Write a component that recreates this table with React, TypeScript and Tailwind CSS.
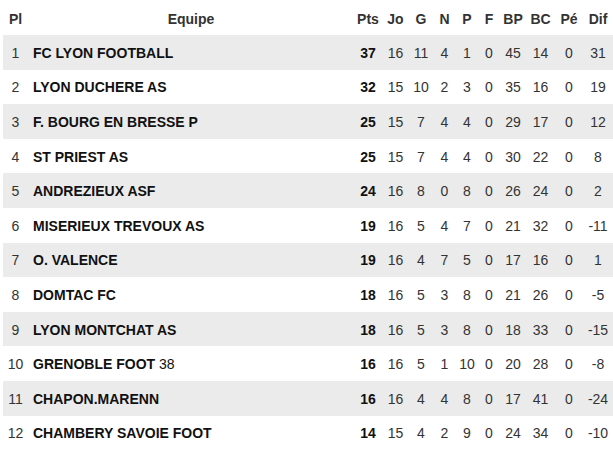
const rows = [
  { pl: 1, name: 'FC LYON FOOTBALL', pts: 37, jo: 16, g: 11, n: 4, p: 1, f: 0, bp: 45, bc: 14, pe: 0, dif: 31 },
  { pl: 2, name: 'LYON DUCHERE AS', pts: 32, jo: 15, g: 10, n: 2, p: 3, f: 0, bp: 35, bc: 16, pe: 0, dif: 19 },
  { pl: 3, name: 'F. BOURG EN BRESSE P', pts: 25, jo: 15, g: 7, n: 4, p: 4, f: 0, bp: 29, bc: 17, pe: 0, dif: 12 },
  { pl: 4, name: 'ST PRIEST AS', pts: 25, jo: 15, g: 7, n: 4, p: 4, f: 0, bp: 30, bc: 22, pe: 0, dif: 8 },
  { pl: 5, name: 'ANDREZIEUX ASF', pts: 24, jo: 16, g: 8, n: 0, p: 8, f: 0, bp: 26, bc: 24, pe: 0, dif: 2 },
  { pl: 6, name: 'MISERIEUX TREVOUX AS', pts: 19, jo: 16, g: 5, n: 4, p: 7, f: 0, bp: 21, bc: 32, pe: 0, dif: -11 },
  { pl: 7, name: 'O. VALENCE', pts: 19, jo: 16, g: 4, n: 7, p: 5, f: 0, bp: 17, bc: 16, pe: 0, dif: 1 },
  { pl: 8, name: 'DOMTAC FC', pts: 18, jo: 16, g: 5, n: 3, p: 8, f: 0, bp: 21, bc: 26, pe: 0, dif: -5 },
  { pl: 9, name: 'LYON MONTCHAT AS', pts: 18, jo: 16, g: 5, n: 3, p: 8, f: 0, bp: 18, bc: 33, pe: 0, dif: -15 },
  { pl: 10, name: 'GRENOBLE FOOT', extra: '38', pts: 16, jo: 16, g: 5, n: 1, p: 10, f: 0, bp: 20, bc: 28, pe: 0, dif: -8 },
  { pl: 11, name: 'CHAPON.MARENN', pts: 16, jo: 16, g: 4, n: 4, p: 8, f: 0, bp: 17, bc: 41, pe: 0, dif: -24 },
  { pl: 12, name: 'CHAMBERY SAVOIE FOOT', pts: 14, jo: 15, g: 4, n: 2, p: 9, f: 0, bp: 24, bc: 34, pe: 0, dif: -10 },
]

const headers = ['Pts', 'Jo', 'G', 'N', 'P', 'F', 'BP', 'BC', 'Pé', 'Dif']

export default function App() {
  return (
    <div className="w-[613px] h-[455px] bg-white pl-[3px] overflow-hidden" style={{ fontFamily: '"Liberation Sans", Arial, sans-serif' }}>
      <table className="table-fixed border-collapse w-[610px] text-[14px] text-[#333]">
        <colgroup>
          <col className="w-[25px]" />
          <col className="w-[326px]" />
          <col className="w-[28px]" />
          <col className="w-[27px]" />
          <col className="w-[24px]" />
          <col className="w-[23px]" />
          <col className="w-[22px]" />
          <col className="w-[22px]" />
          <col className="w-[26px]" />
          <col className="w-[29px]" />
          <col className="w-[28px]" />
          <col className="w-[30px]" />
        </colgroup>
        <thead>
          <tr className="h-[35px]">
            <th className="p-0 pt-[3px] text-center font-bold">Pl</th>
            <th className="p-0 pt-[3px] text-center font-bold">Equipe</th>
            {headers.map((h) => (
              <th key={h} className="p-0 pt-[3px] text-center font-bold">
                {h}
              </th>
            ))}
          </tr>
        </thead>
        <tbody>
          {rows.map((r, i) => (
            <tr key={r.pl} className={`h-[34.6px] ${i % 2 === 0 ? 'bg-[#ebebeb]' : 'bg-white'}`}>
              <td className="p-0 pt-[2px] text-center">{r.pl}</td>
              <td className="p-0 pt-[2px] pl-[5px] text-left whitespace-nowrap">
                <span className="font-bold text-[#111]">{r.name}</span>
                {r.extra && <span className="text-[#111]"> {r.extra}</span>}
              </td>
              <td className="p-0 pt-[2px] text-center font-bold text-[#111]">{r.pts}</td>
              <td className="p-0 pt-[2px] text-center">{r.jo}</td>
              <td className="p-0 pt-[2px] text-center">{r.g}</td>
              <td className="p-0 pt-[2px] text-center">{r.n}</td>
              <td className="p-0 pt-[2px] text-center">{r.p}</td>
              <td className="p-0 pt-[2px] text-center">{r.f}</td>
              <td className="p-0 pt-[2px] text-center">{r.bp}</td>
              <td className="p-0 pt-[2px] text-center">{r.bc}</td>
              <td className="p-0 pt-[2px] text-center">{r.pe}</td>
              <td className="p-0 pt-[2px] text-center">{r.dif}</td>
            </tr>
          ))}
        </tbody>
      </table>
    </div>
  )
}
